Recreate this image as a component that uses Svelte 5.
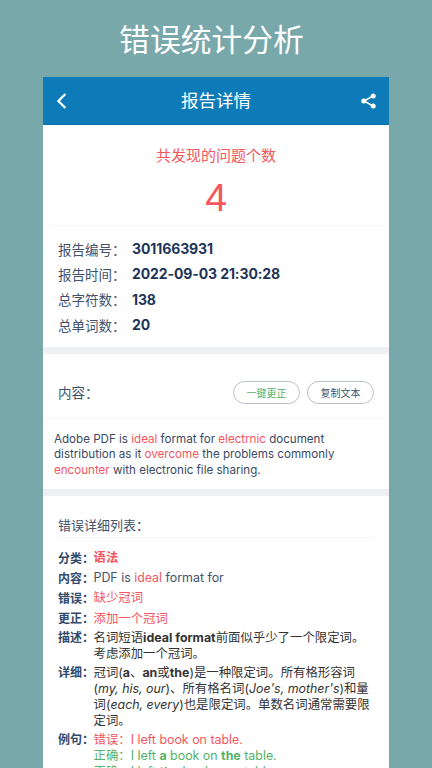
<script>
  const stats = [
    ['报告编号：', '3011663931'],
    ['报告时间：', '2022-09-03 21:30:28'],
    ['总字符数：', '138'],
    ['总单词数：', '20']
  ];
</script>

<div class="page">
  <h1>错误统计分析</h1>
  <div class="card">
    <header class="bar">
      <span class="slot"><svg width="11" height="16" viewBox="0 0 11 16"><path d="M9.4 1 2.4 8l7 7" fill="none" stroke="#fff" stroke-width="2.3"/></svg></span>
      <span class="bar-title">报告详情</span>
      <span class="slot right"><svg width="15" height="16" viewBox="0 0 15 16"><path d="M12 3 3 8l9 5" fill="none" stroke="#fff" stroke-width="1.5"/><circle cx="12.2" cy="3" r="2.5" fill="#fff"/><circle cx="2.7" cy="8" r="2.5" fill="#fff"/><circle cx="12.2" cy="13" r="2.5" fill="#fff"/></svg></span>
    </header>

    <section class="summary">
      <div class="found">共发现的问题个数</div>
      <div class="count">4</div>
    </section>

    <section class="stats">
      {#each stats as [k, v]}
        <div class="stat"><span class="k">{k}</span><b>{v}</b></div>
      {/each}
    </section>

    <section class="content-head">
      <span class="k">内容：</span>
      <div class="btns">
        <span class="btn green">一键更正</span>
        <span class="btn">复制文本</span>
      </div>
    </section>
    <p class="content-text">Adobe PDF is <em>ideal</em> format for <em>electrnic</em> document distribution as it <em>overcome</em> the problems commonly <em>encounter</em> with electronic file sharing.</p>

    <section class="details">
      <div class="details-title">错误详细列表：</div>
      <dl>
        <div class="row r1"><dt>分类：</dt><dd class="red strong">语法</dd></div>
        <div class="row r1"><dt>内容：</dt><dd class="navy">PDF is <span class="red">ideal</span> format for</dd></div>
        <div class="row r3"><dt>错误：</dt><dd class="red">缺少冠词</dd></div>
        <div class="row r3"><dt>更正：</dt><dd class="red">添加一个冠词</dd></div>
        <div class="row r4"><dt>描述：</dt><dd>名词短语<b>ideal format</b>前面似乎少了一个限定词。考虑添加一个冠词。</dd></div>
        <div class="row r4"><dt>详细：</dt><dd>冠词(<b>a</b>、<b>an</b>或<b>the</b>)是一种限定词。所有格形容词(<i>my, his, our</i>)、所有格名词(<i>Joe's, mother's</i>)和量词(<i>each, every</i>)也是限定词。单数名词通常需要限定词。</dd></div>
        <div class="row r4"><dt>例句：</dt><dd>
          <div class="red">错误：I left book on table.</div>
          <div class="green-t">正确：I left <b>a</b> book on <b>the</b> table.</div>
          <div class="green-t">正确：I left <b>the</b> book on a table.</div>
        </dd></div>
      </dl>
    </section>
  </div>
</div>

<style>
  :global(body) { margin: 0; }
  .page {
    width: 432px; height: 768px; overflow: hidden; background: #79a8ab;
    font-family: Inter, "Noto Sans CJK SC", sans-serif; box-sizing: border-box;
    display: flex; flex-direction: column;
  }
  h1 {
    margin: 0; height: 77px; flex: none; display: flex; align-items: center; justify-content: center;
    padding: 0 9px 3px 0; box-sizing: border-box;
    font-size: 30.8px; font-weight: 400; color: #fff;
    font-family: "Liberation Sans", "Noto Sans CJK SC", sans-serif;
  }
  .card { width: 346px; margin-left: 43px; background: #fff; flex: 1; overflow: hidden; }
  .bar {
    height: 48px; background: #0e7bb9; color: #fff; display: flex; align-items: center;
    justify-content: space-between; padding: 0 13px; box-sizing: border-box;
    border-bottom: 1px solid #0b70ab;
  }
  .slot { width: 20px; display: flex; align-items: center; }
  .slot.right { justify-content: flex-end; }
  .bar-title { font-size: 17.5px; padding-bottom: 3px; font-family: "Liberation Sans", "Noto Sans CJK SC", sans-serif; }
  .summary { height: 101px; border-bottom: 1px solid #f7f7f7; text-align: center; box-sizing: border-box; font-family: "Liberation Sans", "Noto Sans CJK SC", sans-serif; color: #f4565f; }
  .found { font-size: 15px; line-height: 20px; padding-top: 21px; }
  .count { font-size: 39px; line-height: 44px; margin-top: 10px; }
  .stats { padding: 10px 15px 10px; border-bottom: 7px solid #eef0f3; }
  .stat { height: 25.3px; display: flex; align-items: center; }
  .k { font-size: 13.5px; color: #42526b; width: 74px; flex: none; }
  .stat b { font-size: 14px; color: #1f3558; font-weight: 700; letter-spacing: -0.1px; }
  .content-head {
    height: 65px; display: flex; align-items: center; justify-content: space-between;
    padding: 12px 15px 0; box-sizing: border-box; border-bottom: 1px solid #f7f7f7;
  }
  .btns { display: flex; gap: 7px; }
  .btn {
    width: 67px; height: 23px; box-sizing: border-box; border: 1px solid #b9c0c7; border-radius: 12px; display: flex;
    align-items: center; justify-content: center; font-size: 10px; color: #42526b;
  }
  .btn.green { color: #55b265; }
  .content-text {
    margin: 0; padding: 13px 11px 11px; font-size: 11.6px; line-height: 15.3px; color: #3b4a63;
    border-bottom: 7px solid #eef0f3;
  }
  .content-text em { font-style: normal; color: #f4565f; }
  .details { padding: 20px 15px 0; }
  .details-title { font-size: 13px; color: #42526b; line-height: 18px; padding-bottom: 3px; border-bottom: 1px solid #f4f4f4; }
  dl { margin: 9px 0 0; font-size: 12.4px; color: #333; }
  .row { display: flex; }
  .r1 { height: 20px; align-items: center; }
  .r3 { height: 20.4px; align-items: center; }
  .r4 { line-height: 16px; margin-top: 2.6px; }
  dt { width: 35.5px; flex: none; font-size: 12px; font-weight: 700; color: #2f4a6b; white-space: nowrap; }
  dd { margin: 0; flex: 1; }
  .red { color: #f4565f; }
  .strong { font-weight: 700; }
  .navy { color: #42526b; }
  .green-t { color: #55b265; }
</style>
